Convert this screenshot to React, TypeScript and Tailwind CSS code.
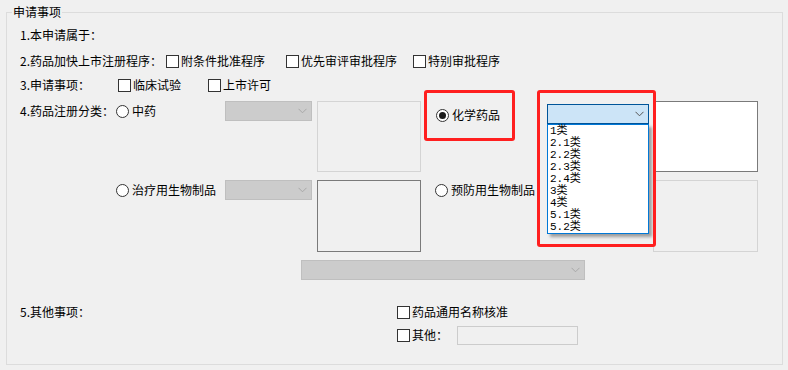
const ui = "font-['Microsoft_YaHei','Noto_Sans_CJK_SC',sans-serif] text-[12px] leading-[16px] text-black"

function Chevron({ color }: { color: string }) {
  return (
    <svg width="9" height="6" viewBox="0 0 9 6" fill="none" stroke={color} strokeWidth="1">
      <path d="M0.5 0.8l4 4 4-4" />
    </svg>
  )
}

function CheckBox({ label, className = "" }: { label: string; className?: string }) {
  return (
    <div className={`flex items-center h-[16px] shrink-0 ${className}`}>
      <span className="w-[13px] h-[13px] border border-[#333333] bg-white shrink-0" />
      <span className="ml-[2px] whitespace-nowrap">{label}</span>
    </div>
  )
}

function Radio({ label, checked = false }: { label: string; checked?: boolean }) {
  return (
    <div className="flex items-center h-[20px]">
      <span className="w-[13px] h-[13px] rounded-full border border-[#333333] bg-white flex items-center justify-center shrink-0">
        {checked && <span className="w-[7px] h-[7px] rounded-full bg-[#1a1a1a]" />}
      </span>
      <span className="ml-[3px] whitespace-nowrap">{label}</span>
    </div>
  )
}

function DisabledCombo({ className = "" }: { className?: string }) {
  return (
    <div className={`h-[20px] border border-[#bfbfbf] bg-[#cccccc] flex items-center justify-end pr-[4px] shrink-0 ${className}`}>
      <Chevron color="#a8a8a8" />
    </div>
  )
}

const items = ["1类", "2.1类", "2.2类", "2.3类", "2.4类", "3类", "4类", "5.1类", "5.2类"]

export default function App() {
  return (
    <div className={`w-[788px] h-[370px] bg-[#f0f0f0] pt-[4px] px-[6px] ${ui}`}>
      <fieldset className="h-[361px] w-[777px] border border-[#dcdcdc]">
        <legend className="ml-[5px] px-[1px] leading-[16px]">申请事项</legend>

        <div className="pl-[13px]">
          <div className="mt-[7px] h-[16px] flex items-center">1.本申请属于：</div>

          <div className="mt-[10px] h-[16px] flex items-center">
            <div className="w-[146px] shrink-0">2.药品加快上市注册程序：</div>
            <CheckBox label="附条件批准程序" className="w-[120px]" />
            <CheckBox label="优先审评审批程序" className="w-[127px]" />
            <CheckBox label="特别审批程序" />
          </div>

          <div className="mt-[8px] h-[16px] flex items-center">
            <div className="w-[98px] shrink-0">3.申请事项：</div>
            <CheckBox label="临床试验" className="w-[90px]" />
            <CheckBox label="上市许可" />
          </div>

          {/* row A */}
          <div className="mt-[8px] flex items-start">
            <div className="w-[96px] h-[20px] flex items-center shrink-0">4.药品注册分类：</div>
            <div className="w-[109px] shrink-0">
              <Radio label="中药" />
            </div>
            <DisabledCombo className="w-[87px]" />
            <div className="ml-[5px] w-[104px] h-[71px] border border-[#d4d4d4] bg-[#f0f0f0] shrink-0" />
            <div className="relative ml-[15px] mt-[4px] w-[111px] shrink-0">
              <Radio label="化学药品" checked />
              <div className="absolute -left-[12px] -top-[15px] w-[91px] h-[51px] border-[3px] border-[#ff1f1f] rounded-[3px]" />
            </div>
            <div className="relative mt-[3px] w-[102px] shrink-0">
              <div className="h-[20px] border border-[#005499] bg-[#cce4f7] flex items-center justify-end pr-[4px]">
                <Chevron color="#555555" />
              </div>
              <div className="absolute left-0 top-[20px] w-[102px] h-[110px] bg-white border border-[#0078d7] pl-[2px] shadow-[3px_3px_3px_rgba(0,0,0,0.35)] font-['Liberation_Mono','Noto_Sans_CJK_SC',monospace] text-[11px] leading-[12px] z-10">
                {items.map((t) => (
                  <div key={t} className="h-[12px] whitespace-nowrap">{t}</div>
                ))}
              </div>
              <div className="absolute -left-[10px] -top-[14px] w-[119px] h-[157px] border-[3px] border-[#ff1f1f] rounded-[3px] z-20" />
            </div>
            <div className="ml-[5px] w-[104px] h-[71px] border border-[#7a7a7a] bg-white shrink-0" />
          </div>

          {/* row B */}
          <div className="mt-[8px] flex items-start">
            <div className="w-[96px] shrink-0" />
            <div className="w-[109px] shrink-0">
              <Radio label="治疗用生物制品" />
            </div>
            <DisabledCombo className="w-[87px]" />
            <div className="ml-[5px] w-[104px] h-[72px] border border-[#7a7a7a] bg-[#f0f0f0] shrink-0" />
            <div className="ml-[14px] w-[218px] shrink-0">
              <Radio label="预防用生物制品" />
            </div>
            <div className="w-[105px] h-[72px] border border-[#d4d4d4] bg-[#f0f0f0] shrink-0" />
          </div>

          {/* row C */}
          <div className="mt-[8px] flex">
            <DisabledCombo className="ml-[281px] w-[284px]" />
          </div>

          <div className="mt-[24px] h-[16px] flex items-center">
            <div className="w-[377px] shrink-0">5.其他事项：</div>
            <CheckBox label="药品通用名称核准" />
          </div>

          <div className="mt-[5px] h-[20px] flex items-center">
            <div className="w-[377px] shrink-0" />
            <CheckBox label="其他：" className="w-[60px]" />
            <div className="w-[121px] h-[19px] border border-[#cccccc] bg-[#f0f0f0]" />
          </div>
        </div>
      </fieldset>
    </div>
  )
}
